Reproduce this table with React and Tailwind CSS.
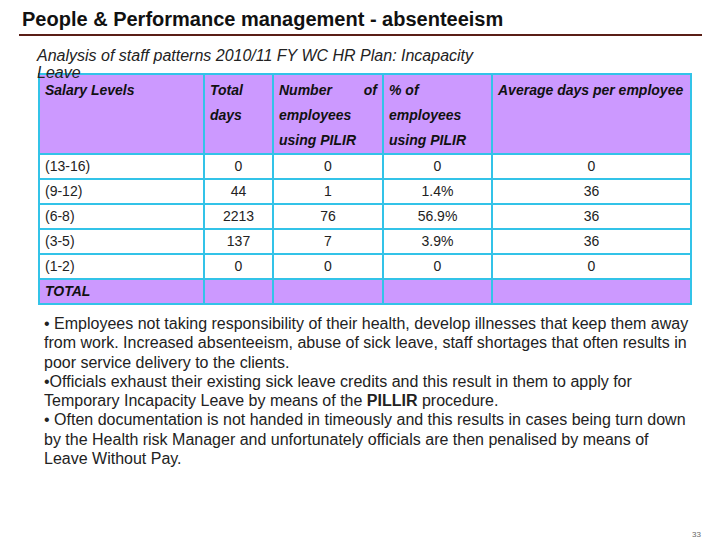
import React from "react";

const rows = [
  ["(13-16)", "0", "0", "0", "0"],
  ["(9-12)", "44", "1", "1.4%", "36"],
  ["(6-8)", "2213", "76", "56.9%", "36"],
  ["(3-5)", "137", "7", "3.9%", "36"],
  ["(1-2)", "0", "0", "0", "0"],
];

export default function App() {
  const cell = "border-2 border-[#33c3e8]";
  return (
    <div className="w-[720px] h-[540px] bg-white relative overflow-hidden text-black" style={{ fontFamily: '"Liberation Sans", Arial, sans-serif' }}>
      <div className="pl-[22px] pt-[8px] text-[20px] font-bold leading-[22px] text-[#111]">
        People &amp; Performance management - absenteeism
      </div>
      <div className="ml-[19px] mt-[4px] w-[683px] h-[2px] bg-[#5a1e16]" />
      <div className="relative z-10 pl-[37px] mt-[11px] w-[490px] italic text-[16px] leading-[17px] text-[#222]">
        Analysis of staff patterns 2010/11 FY WC HR Plan: Incapacity Leave
      </div>
      <table className="ml-[38px] mt-[-8px] border-collapse border-2 border-[#33c3e8] text-[14px]">
        <colgroup>
          <col className="w-[165px]" />
          <col className="w-[69px]" />
          <col className="w-[110px]" />
          <col className="w-[109px]" />
          <col className="w-[199px]" />
        </colgroup>
        <thead>
          <tr className="h-[76px] bg-[#cc99ff] italic font-bold text-[#111] leading-[25px]">
            <th className={`${cell} align-top text-left font-bold pl-[5px] pt-[3px]`}>Salary Levels</th>
            <th className={`${cell} align-top text-left font-bold pl-[5px] pt-[3px]`}>Total<br />days</th>
            <th className={`${cell} align-top text-left font-bold px-[5px] pt-[3px]`}>
              <div className="flex justify-between"><span>Number</span><span>of</span></div>
              employees<br />using PILIR
            </th>
            <th className={`${cell} align-top text-left font-bold pl-[5px] pt-[3px]`}>% of<br />employees<br />using PILIR</th>
            <th className={`${cell} align-top text-left font-bold pl-[5px] pt-[3px]`}>Average days per employee</th>
          </tr>
        </thead>
        <tbody className="text-[#222]">
          {rows.map((r) => (
            <tr key={r[0]} className="h-[25px] bg-white">
              <td className={`${cell} pl-[5px]`}>{r[0]}</td>
              <td className={`${cell} text-center`}>{r[1]}</td>
              <td className={`${cell} text-center`}>{r[2]}</td>
              <td className={`${cell} text-center`}>{r[3]}</td>
              <td className={`${cell} text-center`}>{r[4]}</td>
            </tr>
          ))}
          <tr className="h-[25px] bg-[#cc99ff]">
            <td className={`${cell} pl-[5px] italic font-bold text-[#111]`}>TOTAL</td>
            <td className={cell}></td>
            <td className={cell}></td>
            <td className={cell}></td>
            <td className={cell}></td>
          </tr>
        </tbody>
      </table>
      <div className="ml-[44px] mt-[9px] w-[652px] text-[16px] leading-[19.3px] text-[#222]">
        <p>• Employees not taking responsibility of their health, develop illnesses that keep them away from work. Increased absenteeism, abuse of sick leave, staff shortages that often results in poor service delivery to the clients.</p>
        <p>•Officials exhaust their existing sick leave credits and this result in them to apply for Temporary Incapacity Leave by means of the <span className="font-bold">PILLIR</span> procedure.</p>
        <p>• Often documentation is not handed in timeously and this results in cases being turn down by the Health risk Manager and unfortunately officials are then penalised by means of Leave Without Pay.</p>
      </div>
      <div className="absolute left-[692px] top-[529px] text-[8px] text-[#666]">33</div>
    </div>
  );
}
